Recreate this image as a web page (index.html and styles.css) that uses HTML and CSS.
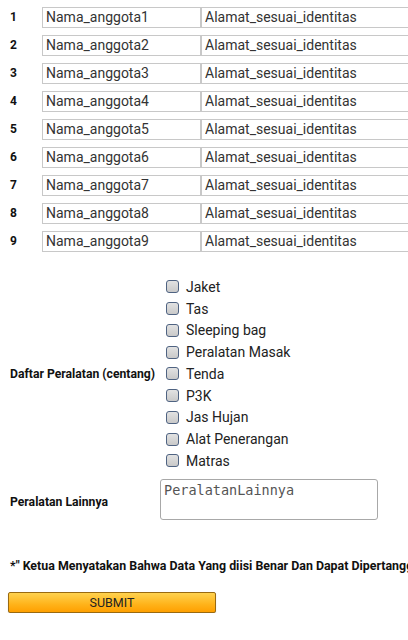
FILE: index.html
```html
<!DOCTYPE html>
<html>
<head>
<meta charset="utf-8">
<link rel="stylesheet" href="styles.css">
</head>
<body>
<div class="page">
  <div class="members">
    <div class="member"><span class="num">1</span><input class="f name" value="Nama_anggota1"><input class="f addr" value="Alamat_sesuai_identitas"></div>
    <div class="member"><span class="num">2</span><input class="f name" value="Nama_anggota2"><input class="f addr" value="Alamat_sesuai_identitas"></div>
    <div class="member"><span class="num">3</span><input class="f name" value="Nama_anggota3"><input class="f addr" value="Alamat_sesuai_identitas"></div>
    <div class="member"><span class="num">4</span><input class="f name" value="Nama_anggota4"><input class="f addr" value="Alamat_sesuai_identitas"></div>
    <div class="member"><span class="num">5</span><input class="f name" value="Nama_anggota5"><input class="f addr" value="Alamat_sesuai_identitas"></div>
    <div class="member"><span class="num">6</span><input class="f name" value="Nama_anggota6"><input class="f addr" value="Alamat_sesuai_identitas"></div>
    <div class="member"><span class="num">7</span><input class="f name" value="Nama_anggota7"><input class="f addr" value="Alamat_sesuai_identitas"></div>
    <div class="member"><span class="num">8</span><input class="f name" value="Nama_anggota8"><input class="f addr" value="Alamat_sesuai_identitas"></div>
    <div class="member"><span class="num">9</span><input class="f name" value="Nama_anggota9"><input class="f addr" value="Alamat_sesuai_identitas"></div>
  </div>

  <div class="equip">
    <div class="label">Daftar Peralatan (centang)</div>
    <div class="checks">
      <label class="check"><input type="checkbox" class="cb">Jaket</label>
      <label class="check"><input type="checkbox" class="cb">Tas</label>
      <label class="check"><input type="checkbox" class="cb">Sleeping bag</label>
      <label class="check"><input type="checkbox" class="cb">Peralatan Masak</label>
      <label class="check"><input type="checkbox" class="cb">Tenda</label>
      <label class="check"><input type="checkbox" class="cb">P3K</label>
      <label class="check"><input type="checkbox" class="cb">Jas Hujan</label>
      <label class="check"><input type="checkbox" class="cb">Alat Penerangan</label>
      <label class="check"><input type="checkbox" class="cb">Matras</label>
    </div>
  </div>

  <div class="other">
    <div class="label">Peralatan Lainnya</div>
    <textarea class="ta">PeralatanLainnya</textarea>
  </div>

  <div class="note">*" Ketua Menyatakan Bahwa Data Yang diisi Benar Dan Dapat Dipertanggungjawabkan</div>

  <button class="submit">SUBMIT</button>
</div>
</body>
</html>
```

FILE: styles.css
```css
html, body {
  margin: 0;
  padding: 0;
  background: #fff;
  overflow: hidden;
}
body {
  font-family: Roboto, "Liberation Sans", sans-serif;
  color: #222;
  width: 408px;
}
.page {
  padding: 3px 0 0 0;
}
.members {
  display: flex;
  flex-direction: column;
}
.member {
  display: flex;
  align-items: center;
  height: 28px;
  padding-left: 10px;
  white-space: nowrap;
}
.num {
  flex: none;
  width: 32px;
  font-weight: bold;
  font-size: 12px;
  color: #111;
}
.f {
  box-sizing: border-box;
  flex: none;
  height: 21px;
  border: 1px solid #c8c8c8;
  border-radius: 0;
  padding: 0 3px;
  margin: 0;
  font-family: Roboto, "Liberation Sans", sans-serif;
  font-size: 14px;
  color: #333;
  background: #fff;
  outline: none;
}
.name {
  width: 159px;
}
.addr {
  width: 230px;
}
.equip {
  display: flex;
  align-items: center;
  margin-top: 21px;
  padding-left: 10px;
}
.label {
  width: 156px;
  flex: none;
  font-weight: bold;
  font-size: 12.2px;
  color: #111;
}
.checks {
  display: flex;
  flex-direction: column;
}
.check {
  display: flex;
  align-items: center;
  height: 21.75px;
  font-size: 14px;
  color: #222;
}
.cb {
  -webkit-appearance: none;
  appearance: none;
  box-sizing: border-box;
  width: 13px;
  height: 13px;
  margin: 0 7px 0 0;
  border: 1.5px solid #4f6382;
  border-radius: 3px;
  background: linear-gradient(#e2e2e2, #c9c9c9);
}
.other {
  display: flex;
  align-items: center;
  margin-top: 7px;
  padding-left: 10px;
}
.other .label {
  width: 150px;
  padding-top: 6px;
}
.ta {
  box-sizing: border-box;
  width: 218px;
  height: 41px;
  margin: 0;
  border: 1px solid #a8a8a8;
  border-radius: 3px;
  padding: 2px 3px;
  font-family: "DejaVu Sans Mono", monospace;
  font-size: 13.5px;
  line-height: 16px;
  color: #555;
  resize: none;
  outline: none;
}
.note {
  margin-top: 38px;
  padding-left: 10px;
  font-weight: bold;
  font-size: 12.4px;
  color: #111;
  white-space: nowrap;
}
.submit {
  display: block;
  box-sizing: border-box;
  margin: 19px 0 0 8px;
  width: 208px;
  height: 21px;
  padding: 0;
  border: 1px solid #9a6a10;
  border-radius: 2px;
  background: linear-gradient(#ffd24f, #ffb31a 60%, #ffa000);
  font-family: Roboto, "Liberation Sans", sans-serif;
  font-size: 12.5px;
  color: #222;
  box-shadow: 0 1px 1px rgba(0,0,0,0.25);
}
```
